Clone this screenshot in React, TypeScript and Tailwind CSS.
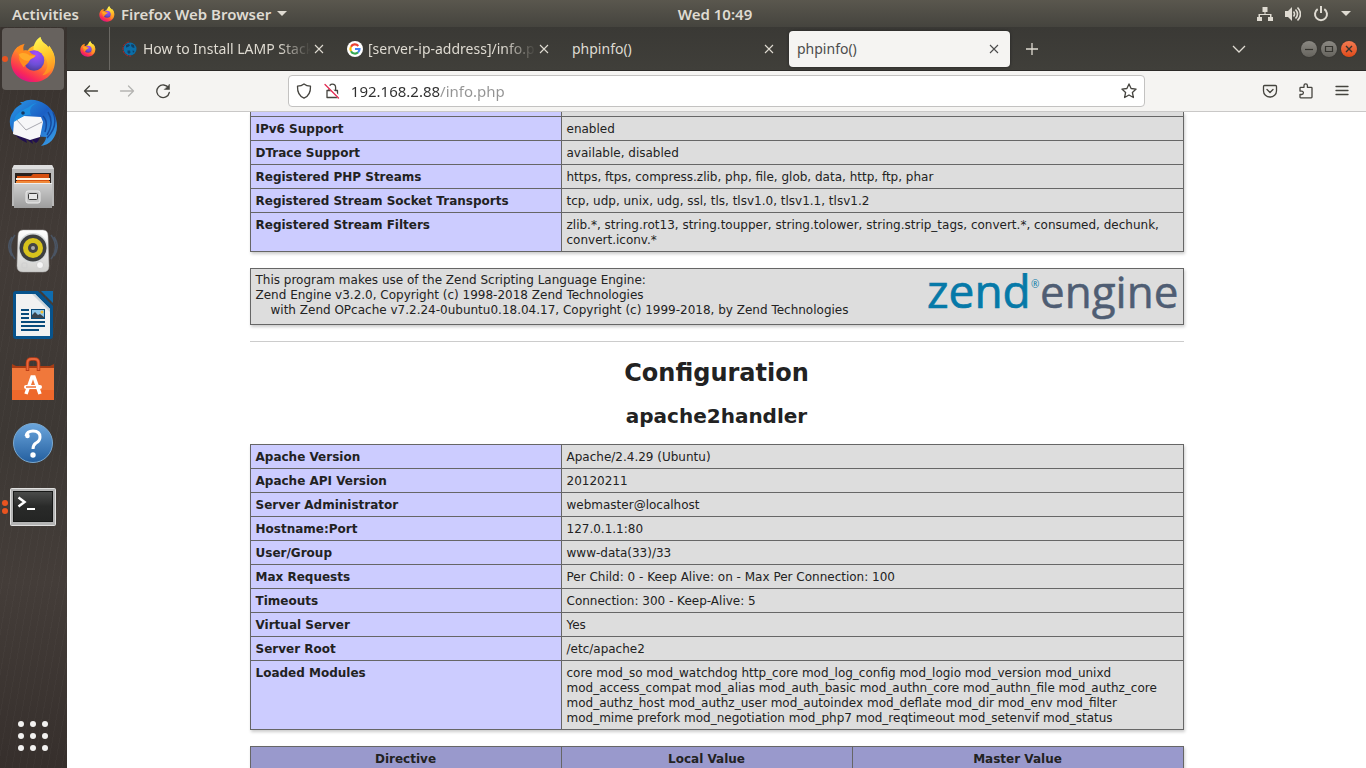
import React from "react";

const uiFont = "font-['Noto_Sans','Open_Sans',sans-serif]";
const pageFont = "font-['DejaVu_Sans',sans-serif]";

function FirefoxLogo({ id, className }: { id: string; className: string }) {
  return (
    <svg viewBox="0 0 48 48" className={className} aria-hidden="true">
      <defs>
        <linearGradient id={id + "body"} x1="0.8" y1="0.05" x2="0.3" y2="1">
          <stop offset="0" stopColor="#fff04a" />
          <stop offset="0.35" stopColor="#ffae27" />
          <stop offset="0.62" stopColor="#ff6634" />
          <stop offset="0.85" stopColor="#f9285a" />
          <stop offset="1" stopColor="#d9128a" />
        </linearGradient>
        <linearGradient id={id + "tail"} x1="0.3" y1="0" x2="0.6" y2="1">
          <stop offset="0" stopColor="#fff551" />
          <stop offset="0.5" stopColor="#ffc92c" />
          <stop offset="1" stopColor="#ff8a20" />
        </linearGradient>
        <radialGradient id={id + "globe"} cx="0.6" cy="0.2" r="0.85">
          <stop offset="0" stopColor="#a64cff" />
          <stop offset="0.6" stopColor="#6d4fd6" />
          <stop offset="1" stopColor="#4b3a96" />
        </radialGradient>
      </defs>
      <path
        d="M8 11c2 2 3 4 4 5 2-1 4-1 6-1 2-3 5-5 9-6 0-3 1-6 4-8 1 4 3 6 6 8 1 1 2 2 2 3l1-2c4 5 6 10 6 15 0 13-9 22-22 22S1 38 1 26c0-5 2-9 4-12 1-1 2-2 3-3z"
        fill={"url(#" + id + "body)"}
      />
      <path d="M31 1c1 4 3 6 6 8 1 1 2 2 2 3l1-2c5 7 7 14 4 21-2 6-7 9-11 9 6-6 7-12 3-18-3-4-8-6-12-8 0-5 2-10 7-13z" fill={"url(#" + id + "tail)"} />
      <circle cx="24.500" cy="25" r="10.500" fill={"url(#" + id + "globe)"} />
      <path d="M6 14c1-3 5-5 9-6-1 2-2 4-1 7 3-1 5 0 8 3 1 1 4 1 4 2 0 2-5 3-6 5-1 3-4 4-6 7-2-3-5-6-5-11 0-3-1-5-3-7z" fill="#ff8a1e" />
      <path d="M9 19c4-3 9-1 11 1l6 0c0 2-5 3-6 5-5 1-9-1-11-6z" fill="#ffb02c" opacity="0.8" />
    </svg>
  );
}

function ThunderbirdLogo() {
  return (
    <svg viewBox="0 0 48 48" className="size-12" aria-hidden="true">
      <defs>
        <linearGradient id="tb" x1="0" y1="0" x2="1" y2="1">
          <stop offset="0" stopColor="#2a9be8" />
          <stop offset="0.5" stopColor="#1b5fc4" />
          <stop offset="1" stopColor="#3aa4ea" />
        </linearGradient>
      </defs>
      <path d="M14 3c6-4 16-2 22 2 8 5 12 14 12 22 0 12-8 19-16 20 3-3 5-6 5-9L6 36C0 29-1 20 4 13c2-4 5-6 9-8l-2-2z" fill="url(#tb)" />
      <path d="M5 33l17 5 10-2c-2 4-2 6-5 8l-4-3 1 4-7-5 1 4c-6-3-11-6-13-11z" fill="#211050" />
      <path d="M5 22l10-5 17 1 2 5-3 15-10 3-17-6z" fill="#f6f6f8" />
      <path d="M7 20l10 11 16-8" fill="none" stroke="#a8a8b0" strokeWidth="1" />
      <path d="M5 23c0-7 6-11 13-14 3-1 4-4 10-5-7 3-8 8-6 12-6-1-10 3-17 7z" fill="#1d8fe0" />
      <circle cx="14" cy="14" r="1.800" fill="#17375f" />
      <path d="M34 17c4 4 4 10 2 16M39 13c5 8 4 15-1 23M44 13c4 10 2 18-6 26" fill="none" stroke="#164a9d" strokeWidth="1.500" />
    </svg>
  );
}

function FilesLogo() {
  return (
    <svg viewBox="0 0 44 46" className="h-[46px] w-[44px]" aria-hidden="true">
      <defs>
        <linearGradient id="fl" x1="0" y1="0" x2="0" y2="1">
          <stop offset="0" stopColor="#cfcfcf" />
          <stop offset="1" stopColor="#9d9d9d" />
        </linearGradient>
      </defs>
      <path d="M3 1h38l2 4v37H1V5z" fill="#b9b9b9" />
      <path d="M3 1h38l2 4H1z" fill="#dedede" />
      <rect x="4" y="9" width="36" height="11" fill="#2a211d" />
      <path d="M6 12h14l2-2h16v8H6z" fill="#d6500f" />
      <path d="M5 14h34v2H5z" fill="#fff1dc" />
      <path d="M5 17h34v2H5z" fill="#f08a3a" />
      <path d="M3 19h38v25H3z" fill="url(#fl)" />
      <path d="M3 19h38v1H3z" fill="#eee" />
      <rect x="15" y="27" width="14" height="12" rx="2" fill="#c9c9c9" stroke="#ececec" />
      <rect x="17.500" y="29.500" width="9" height="6" rx="1" fill="#e7e7e7" stroke="#3c3c3c" />
    </svg>
  );
}

function RhythmboxLogo() {
  return (
    <svg viewBox="0 0 50 46" className="h-[46px] w-[50px]" aria-hidden="true">
      <defs>
        <linearGradient id="rb" x1="0" y1="0" x2="0" y2="1">
          <stop offset="0" stopColor="#fff" />
          <stop offset="1" stopColor="#cfcfcd" />
        </linearGradient>
      </defs>
      <path d="M7 7c-6 8-6 16 0 24M4 9c-5 7-4 13 0 19M43 7c6 8 6 16 0 24M46 9c5 7 4 13 0 19" fill="none" stroke="#54739a" strokeWidth="1.500" opacity="0.45" />
      <path d="M15 2h20q5 0 5 6l1 30q0 6-6 6H15q-6 0-6-6l1-30q0-6 5-6z" fill="url(#rb)" stroke="#aaa" strokeWidth="0.500" />
      <circle cx="25" cy="20" r="15" fill="#d6d9da" />
      <circle cx="25" cy="20" r="13.500" fill="#3d3f40" />
      <circle cx="25" cy="20" r="10" fill="#d8c31c" />
      <circle cx="25" cy="20" r="5" fill="#454545" />
      <circle cx="25" cy="20" r="2" fill="#aaa" />
      <circle cx="32" cy="37" r="3.500" fill="#f5f5f5" stroke="#c4c4c4" strokeWidth="0.700" />
      <rect x="14" y="35" width="5" height="5" rx="1" fill="none" stroke="#cfcfcf" />
    </svg>
  );
}

function WriterLogo() {
  return (
    <svg viewBox="0 0 40 48" className="h-12 w-10" aria-hidden="true">
      <path d="M3 0h22l15 15v30q0 3-3 3H3q-3 0-3-3V3q0-3 3-3z" fill="#07538c" />
      <path d="M28 0h12v12z" fill="#0f6cae" />
      <path d="M3 3h19l15 15v27H3z" fill="#f1f1f1" />
      <path d="M22 3l15 15v3L19 3z" fill="#c9d3da" />
      <path d="M8 18h8v2H8zM8 22h8v2H8zM8 26h8v2H8zM8 30h24v2H8zM8 34h24v2H8zM8 38h18v2H8z" fill="#084a7b" />
      <rect x="18" y="18" width="14" height="10" fill="#084a7b" />
      <rect x="19" y="19" width="12" height="8" fill="#8dc4e8" />
      <path d="M19 27v-3l3-3 3 3 2-1 4 3v1z" fill="#39424c" />
      <circle cx="29" cy="21" r="1.500" fill="#f4bd30" />
    </svg>
  );
}

function SoftwareLogo() {
  return (
    <svg viewBox="0 0 42 44" className="h-11 w-[42px]" aria-hidden="true">
      <path d="M0 7l4 2h34l4-2v6H0z" fill="#a83c14" />
      <rect y="11" width="42" height="32" fill="#f0783b" />
      <rect y="33" width="42" height="10" fill="#ee682b" />
      <path d="M15.500 14V6q0-4 4-4h3q4 0 4 4v8" fill="none" stroke="#ba3d16" strokeWidth="3.500" />
      <path d="M15.500 13V6q0-4 4-4h3q4 0 4 4v7" fill="none" stroke="#e8663c" strokeWidth="1.800" />
      <path d="M14 37l6-17h2l6 17" fill="none" stroke="#fff" strokeWidth="3.500" />
      <rect x="12" y="28" width="18" height="4" rx="2" fill="#fff" />
      <path d="M14 30h10" stroke="#ef7034" strokeWidth="1.500" />
    </svg>
  );
}

function HelpLogo() {
  return (
    <svg viewBox="0 0 42 42" className="size-[42px]" aria-hidden="true">
      <defs>
        <linearGradient id="hp" x1="0" y1="0" x2="0" y2="1">
          <stop offset="0" stopColor="#6ba6dd" />
          <stop offset="1" stopColor="#245f9f" />
        </linearGradient>
      </defs>
      <circle cx="21" cy="21" r="19.500" fill="url(#hp)" stroke="#7ba9d0" />
      <path d="M14 14q1-5 7-5 7 0 7 6 0 4-4 6-3 2-3 6" fill="none" stroke="#fff" strokeWidth="3" />
      <circle cx="15.500" cy="14" r="2.300" fill="#fff" />
      <circle cx="21" cy="33" r="2.700" fill="#fff" />
    </svg>
  );
}

function TerminalLogo() {
  return (
    <svg viewBox="0 0 46 38" className="h-[38px] w-[46px]" aria-hidden="true">
      <defs>
        <linearGradient id="tm" x1="0" y1="0" x2="0" y2="1">
          <stop offset="0" stopColor="#4a4b4a" />
          <stop offset="0.5" stopColor="#292a29" />
          <stop offset="1" stopColor="#242524" />
        </linearGradient>
      </defs>
      <rect x="0.500" y="0.500" width="45" height="37" rx="1" fill="#b4b4b4" stroke="#e0e0df" />
      <rect x="3" y="3" width="40" height="31" fill="#171817" />
      <rect x="4" y="4" width="38" height="29" fill="url(#tm)" />
      <path d="M8.500 9.500l6 4.500-6 4.500" fill="none" stroke="#fff" strokeWidth="2.500" />
      <path d="M17 21h8" stroke="#fff" strokeWidth="2" />
    </svg>
  );
}

function DockItem({ label, active, dots = 0, children }: { label: string; active?: boolean; dots?: number; children: React.ReactNode }) {
  return (
    <button
      type="button"
      aria-label={label}
      className={
        "relative mx-auto my-px flex size-[62px] shrink-0 items-center justify-center rounded " + (active ? "bg-[#67625e]" : "")
      }
    >
      {children}
      {dots > 0 && (
        <span className="absolute top-0 bottom-0 left-0 flex flex-col justify-center gap-[2px]">
          {Array.from({ length: dots }, (_, i) => (
            <span key={i} className="size-[6px] rounded-full bg-[#e95420]" />
          ))}
        </span>
      )}
    </button>
  );
}

function Cross() {
  return (
    <svg viewBox="0 0 16 16" className="size-4" aria-hidden="true">
      <path d="M4 4l8 8M12 4l-8 8" stroke="currentColor" strokeWidth="1.100" fill="none" />
    </svg>
  );
}

function Tab({ title, icon, active, fade }: { title: string; icon?: React.ReactNode; active?: boolean; fade?: boolean }) {
  return (
    <div
      className={
        "flex h-9 w-[221px] min-w-0 items-center rounded pr-2 pl-2 " +
        (active ? "bg-[#f5f4f2] text-[#4c4c4c] shadow-[0_0_3px_#222]" : "text-[#dfdbd2]")
      }
    >
      <button type="button" className="flex min-w-0 flex-1 items-center gap-[5px] text-left">
        {icon}
        <span
          className={
            "min-w-0 flex-1 overflow-hidden text-sm whitespace-nowrap " +
            (fade ? "[mask-image:linear-gradient(to_right,#000_calc(100%-32px),transparent)]" : "")
          }
        >
          {title}
        </span>
      </button>
      <button type="button" aria-label={"Close " + title}>
        <Cross />
      </button>
    </div>
  );
}

function SiteIcon() {
  return (
    <svg viewBox="0 0 16 16" className="size-4 shrink-0" aria-hidden="true">
      <circle cx="8" cy="8" r="6.500" fill="#0b6ea8" />
      <path d="M7 1a7 7 0 1 0 2 14" fill="none" stroke="#a9232c" strokeWidth="1" strokeDasharray="3 1" />
      <path d="M4 4l3-1 1 1.500-2 1.500-2 .5zM9.500 3l2.500 1 .5 3-2-.5-1.500-1.500zM5.500 9.500l2.500 0 .5 2-1.500 1.500-1.500-1.500zM10.500 9.500l2 .5-1.500 2z" fill="#123f63" />
    </svg>
  );
}

function GoogleIcon() {
  return (
    <svg viewBox="0 0 16 16" className="size-4 shrink-0" aria-hidden="true">
      <circle cx="8" cy="8" r="8" fill="#fff" />
      <g fill="none" strokeWidth="2.200">
        <path d="M4 5.700A4.500 4.500 0 0 1 11.300 4.900" stroke="#ea4335" />
        <path d="M4 10.200a4.500 4.500 0 0 1 0-4.500" stroke="#fbbc05" />
        <path d="M11 11.400A4.500 4.500 0 0 1 4 10.200" stroke="#34a853" />
        <path d="M8 8h4.500q0 2.200-1.500 3.400" stroke="#4285f4" />
      </g>
    </svg>
  );
}

function TopBar() {
  return (
    <header className="flex h-[27px] shrink-0 items-center bg-linear-to-b from-[#5a574e] to-[#45443e] text-[15px] leading-5 font-semibold text-[#dfdbd2] [text-shadow:0_1px_1px_#222]">
      <div className="flex flex-1 items-center pl-3">
        <button type="button">Activities</button>
        <button type="button" className="ml-5 flex items-center gap-[6px] whitespace-nowrap">
          <FirefoxLogo id="top" className="size-4" />
          Firefox Web Browser
          <svg viewBox="0 0 10 5" className="h-[5px] w-[10px]" aria-hidden="true">
            <path d="M0 0h10L5 5z" fill="currentColor" />
          </svg>
        </button>
      </div>
      <button type="button" className="pl-[67px]">Wed 10:49</button>
      <div className="flex flex-1 items-center justify-end gap-3 pr-[15px]">
        <svg viewBox="0 0 16 16" className="size-4" fill="currentColor" aria-hidden="true">
          <path d="M5.500 1h5v5h-2v2h6v3H16v4h-5v-4h2V9H3v2h2v4H0v-4h1.500V8h6V6h-2z" />
        </svg>
        <svg viewBox="0 0 16 16" className="size-4" aria-hidden="true">
          <path d="M0 5h3l4-4v14l-4-4H0z" fill="currentColor" />
          <path d="M8.500 5.500q2 2.500 0 5M10.500 3.500q4 4.500 0 9M12.500 1.500q6 6.500 0 13" fill="none" stroke="currentColor" strokeWidth="1.600" />
        </svg>
        <svg viewBox="0 0 16 16" className="size-4" fill="none" stroke="currentColor" strokeWidth="2" aria-hidden="true">
          <path d="M4.700 3.200a6 6 0 1 0 6.600 0M8 0v7" />
        </svg>
        <svg viewBox="0 0 10 5" className="h-[5px] w-[10px]" aria-hidden="true">
          <path d="M0 0h10L5 5z" fill="currentColor" />
        </svg>
      </div>
    </header>
  );
}

function Dock() {
  return (
    <nav
      aria-label="Dock"
      className="flex w-[67px] shrink-0 flex-col bg-[#3d3733] bg-[repeating-linear-gradient(100deg,#ffffff05_0_1px,transparent_1px_7px),linear-gradient(to_bottom,#38322e,#423b37_30%,#3d3834_55%,#443d39_75%,#362f2c)] pr-px"
    >
      <DockItem label="Firefox" active dots={1}>
        <FirefoxLogo id="dock" className="size-[47px]" />
      </DockItem>
      <DockItem label="Thunderbird"><ThunderbirdLogo /></DockItem>
      <DockItem label="Files"><FilesLogo /></DockItem>
      <DockItem label="Rhythmbox"><RhythmboxLogo /></DockItem>
      <DockItem label="LibreOffice Writer"><WriterLogo /></DockItem>
      <DockItem label="Ubuntu Software"><SoftwareLogo /></DockItem>
      <DockItem label="Help"><HelpLogo /></DockItem>
      <DockItem label="Terminal" dots={2}><TerminalLogo /></DockItem>
      <div className="mt-auto">
        <DockItem label="Show Applications">
          <svg viewBox="0 0 30 30" className="size-[30px]" fill="#f2f1f0" aria-hidden="true">
            {[3, 15, 27].map((y) => [3, 15, 27].map((x) => <circle key={x + "-" + y} cx={x} cy={y} r="3" />))}
          </svg>
        </DockItem>
      </div>
    </nav>
  );
}

function TabBar() {
  return (
    <div className="flex h-11 shrink-0 items-center border-b border-[#2c2a28] bg-linear-to-b from-[#3a3935] to-[#403f3a] text-[#dfdbd2]">
      <button type="button" aria-label="Pinned tab" className="mr-1 flex h-full w-[43px] items-center justify-center border-r border-[#6a6863] pr-px">
        <FirefoxLogo id="pin" className="size-4" />
      </button>
      <div className="flex min-w-0 gap-1">
        <Tab title="How to Install LAMP Stack" icon={<SiteIcon />} fade />
        <Tab title="[server-ip-address]/info.php" icon={<GoogleIcon />} fade />
        <Tab title="phpinfo()" />
        <Tab title="phpinfo()" active />
      </div>
      <button type="button" aria-label="New tab" className="ml-[14px]">
        <svg viewBox="0 0 16 16" className="size-4" aria-hidden="true">
          <path d="M8 2v12M2 8h12" stroke="currentColor" strokeWidth="1.300" />
        </svg>
      </button>
      <div className="ml-auto flex items-center pr-[9px]">
        <button type="button" aria-label="List all tabs" className="mr-[54px]">
          <svg viewBox="0 0 16 16" className="size-4" fill="none" aria-hidden="true">
            <path d="M2 5l6 6 6-6" stroke="currentColor" strokeWidth="1.300" />
          </svg>
        </button>
        <div className="flex gap-1 text-[#35342f]">
          <button type="button" aria-label="Minimize" className="size-4 rounded-full bg-linear-to-b from-[#8b8983] to-[#66645e] shadow-[0_0_1px_#222]">
            <svg viewBox="0 0 16 16" aria-hidden="true"><path d="M4 8.500h8" stroke="currentColor" strokeWidth="1.200" /></svg>
          </button>
          <button type="button" aria-label="Maximize" className="size-4 rounded-full bg-linear-to-b from-[#8b8983] to-[#66645e] shadow-[0_0_1px_#222]">
            <svg viewBox="0 0 16 16" aria-hidden="true"><path d="M4.500 5.500h7v5h-7z" fill="none" stroke="currentColor" strokeWidth="1.200" /></svg>
          </button>
          <button type="button" aria-label="Close window" className="size-4 rounded-full bg-linear-to-b from-[#f37a50] to-[#df4a17] shadow-[0_0_1px_#222]">
            <svg viewBox="0 0 16 16" aria-hidden="true"><path d="M5 5l6 6M11 5l-6 6" stroke="currentColor" strokeWidth="1.400" /></svg>
          </button>
        </div>
      </div>
    </div>
  );
}

function ToolButton({ label, muted, children }: { label: string; muted?: boolean; children: React.ReactNode }) {
  return (
    <button type="button" aria-label={label} className={muted ? "text-[#b5b4b2]" : "text-[#45443f]"}>
      <svg viewBox="0 0 16 16" className="size-4" fill="none" stroke="currentColor" strokeWidth="1.300" strokeLinecap="round" strokeLinejoin="round" aria-hidden="true">
        {children}
      </svg>
    </button>
  );
}

function ToolBar() {
  return (
    <div className="flex h-[41px] shrink-0 items-center border-b border-[#c9c8c7] bg-[#f5f4f2] pr-4 pl-4">
      <div className="flex gap-5">
        <ToolButton label="Back"><path d="M14.500 8H1.500M6.500 3L1.500 8l5 5" /></ToolButton>
        <ToolButton label="Forward" muted><path d="M1.500 8h13M9.500 3l5 5-5 5" /></ToolButton>
        <ToolButton label="Reload">
          <path d="M13.500 5A6.300 6.300 0 1 0 14.300 9.500" />
          <path d="M14.500 1.500v5h-5z" fill="currentColor" strokeWidth="0.500" />
        </ToolButton>
      </div>
      <div className="flex-[5]" />
      <div className="flex h-8 flex-[36] items-center gap-3 rounded border border-[#c3c2c1] bg-white px-[7px] text-[#45443f]">
        <ToolButton label="Tracking protection"><path d="M8 .9C6 2.500 4 3 1.500 3.200 1.300 9 3 13 8 15.200c5-2.200 6.700-6.200 6.500-12C12 3 10 2.500 8 .9z" /></ToolButton>
        <ToolButton label="Connection is not secure">
          <path d="M5 7.500V4.500a3.300 3.300 0 0 1 6.600 0v3M3 7.500h10.500v7H3z" />
          <path d="M2 1l13 13.500" stroke="#fff" strokeWidth="3" />
          <path d="M1 1.500l13.500 13.500" stroke="#e22850" />
        </ToolButton>
        <input
          aria-label="Address"
          defaultValue="192.168.2.88/info.php"
          className="-ml-px min-w-0 flex-1 bg-[linear-gradient(to_right,#2f2f2f_89px,#939393_89px)] bg-clip-text text-[15px] leading-5 text-transparent outline-none"
        />
        <ToolButton label="Bookmark"><path d="M8 .9l2.100 4.600 5 .6-3.700 3.400 1 5L8 12l-4.400 2.500 1-5L.9 6.100l5-.6z" /></ToolButton>
      </div>
      <div className="flex-[5]" />
      <div className="flex gap-5">
        <ToolButton label="Save to Pocket">
          <path d="M2.500 2.500h11q1 0 1 1V8a6.500 6 0 0 1-13 0V3.500q0-1 1-1z" />
          <path d="M5 6.500l3 3 3-3" />
        </ToolButton>
        <ToolButton label="Extensions">
          <path d="M2 5q0-.7.700-.7H6V2.600a1.700 1.700 0 0 1 3.400 0v1.700h3.900q.7 0 .7.700v9q0 .8-.7.800H2.700Q2 14.800 2 14v-2.500h1.700a1.700 1.700 0 0 0 0-3.400H2z" />
        </ToolButton>
        <ToolButton label="Open application menu"><path d="M2 3.500h12M2 7.500h12M2 11.500h12" /></ToolButton>
      </div>
    </div>
  );
}

const supportRows: [string, string][] = [
  ["IPv6 Support", "enabled"],
  ["DTrace Support", "available, disabled"],
  ["Registered PHP Streams", "https, ftps, compress.zlib, php, file, glob, data, http, ftp, phar"],
  ["Registered Stream Socket Transports", "tcp, udp, unix, udg, ssl, tls, tlsv1.0, tlsv1.1, tlsv1.2"],
  [
    "Registered Stream Filters",
    "zlib.*, string.rot13, string.toupper, string.tolower, string.strip_tags, convert.*, consumed, dechunk, convert.iconv.*",
  ],
];

const apacheRows: [string, string][] = [
  ["Apache Version", "Apache/2.4.29 (Ubuntu)"],
  ["Apache API Version", "20120211"],
  ["Server Administrator", "webmaster@localhost"],
  ["Hostname:Port", "127.0.1.1:80"],
  ["User/Group", "www-data(33)/33"],
  ["Max Requests", "Per Child: 0 - Keep Alive: on - Max Per Connection: 100"],
  ["Timeouts", "Connection: 300 - Keep-Alive: 5"],
  ["Virtual Server", "Yes"],
  ["Server Root", "/etc/apache2"],
  [
    "Loaded Modules",
    "core mod_so mod_watchdog http_core mod_log_config mod_logio mod_version mod_unixd mod_access_compat mod_alias mod_auth_basic mod_authn_core mod_authn_file mod_authz_core mod_authz_host mod_authz_user mod_autoindex mod_deflate mod_dir mod_env mod_filter mod_mime prefork mod_negotiation mod_php7 mod_reqtimeout mod_setenvif mod_status",
  ],
];

const tableClass = "w-full table-fixed border-collapse shadow-[1px_2px_3px_#ccc]";
const cellClass = "border border-[#666] px-[5px] pt-[5px] pb-[3px]";

function InfoTable({ rows, continued }: { rows: [string, string][]; continued?: boolean }) {
  return (
    <table className={tableClass}>
      <colgroup>
        <col className="w-[311px]" />
        <col />
      </colgroup>
      <tbody>
        {continued && (
          <tr className="h-1">
            <td className="border border-t-0 border-[#666] bg-[#ccf]" />
            <td className="border border-t-0 border-[#666] bg-[#ddd]" />
          </tr>
        )}
        {rows.map(([name, value]) => (
          <tr key={name}>
            <th scope="row" className={cellClass + " bg-[#ccf] text-left align-baseline font-bold"}>{name}</th>
            <td className={cellClass + " bg-[#ddd] align-baseline"}>{value}</td>
          </tr>
        ))}
      </tbody>
    </table>
  );
}

function ZendLogo() {
  return (
    <svg viewBox="0 0 252 47" className="h-[47px] w-[252px] shrink-0" role="img" aria-label="zend engine">
      <g fontFamily="'Open Sans', sans-serif">
        <text x="-1" y="35" fill="#0679a8" stroke="#0679a8" strokeWidth="0.700" fontSize="46">zend</text>
        <text x="112" y="35" fill="#4f5d73" stroke="#4f5d73" strokeWidth="0.500" fontSize="44">engine</text>
        <text x="103" y="15" fill="#0679a8" fontSize="10">®</text>
      </g>
    </svg>
  );
}

export default function App() {
  return (
    <div className={"flex h-screen flex-col overflow-hidden " + uiFont}>
      <TopBar />
      <div className="flex min-h-0 flex-1">
        <Dock />
        <div className="flex min-w-0 flex-1 flex-col">
          <TabBar />
          <ToolBar />
          <main className={"min-h-0 flex-1 overflow-hidden bg-white text-xs leading-[15px] text-[#222] " + pageFont}>
            <div className="mx-auto flex w-full max-w-[934px] flex-col gap-4">
              <InfoTable rows={supportRows} continued />
              <section className="flex items-start justify-between border border-[#666] bg-[#ddd] py-1 pr-[3px] pl-[5px] shadow-[1px_2px_3px_#ccc]">
                <p>
                  This program makes use of the Zend Scripting Language Engine:
                  <br />
                  Zend Engine v3.2.0, Copyright (c) 1998-2018 Zend Technologies
                  <br />
                  <span className="pl-[15px]">with Zend OPcache v7.2.24-0ubuntu0.18.04.17, Copyright (c) 1999-2018, by Zend Technologies</span>
                </p>
                <ZendLogo />
              </section>
              <hr className="border-[#ccc]" />
              <h1 className="text-center text-2xl leading-[30px] font-bold">Configuration</h1>
              <h2 className="text-center text-xl leading-6 font-bold">apache2handler</h2>
              <InfoTable rows={apacheRows} />
              <table className={tableClass}>
                <colgroup>
                  <col className="w-[311px]" />
                  <col className="w-[291px]" />
                  <col />
                </colgroup>
                <thead>
                  <tr className="bg-[#99c]">
                    <th scope="col" className={cellClass}>Directive</th>
                    <th scope="col" className={cellClass}>Local Value</th>
                    <th scope="col" className={cellClass}>Master Value</th>
                  </tr>
                </thead>
              </table>
            </div>
          </main>
        </div>
      </div>
    </div>
  );
}
